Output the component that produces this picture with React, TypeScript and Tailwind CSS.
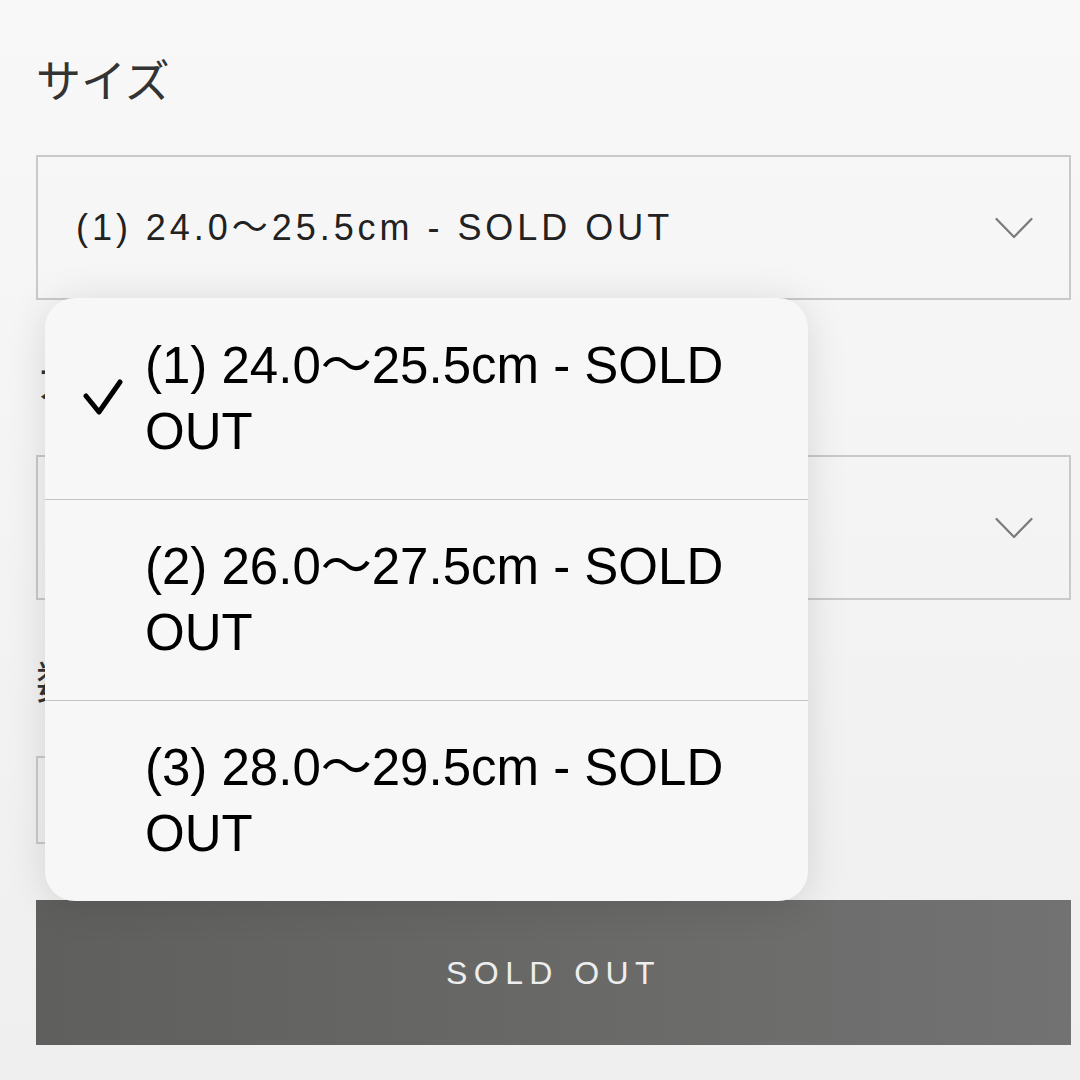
import React from "react";

const options = [
  { id: 1, label: "(1) 24.0〜25.5cm - SOLD OUT", selected: true },
  { id: 2, label: "(2) 26.0〜27.5cm - SOLD OUT", selected: false },
  { id: 3, label: "(3) 28.0〜29.5cm - SOLD OUT", selected: false },
];

function Chevron() {
  return (
    <svg width="38" height="24" viewBox="0 0 38 24" fill="none" className="shrink-0">
      <path d="M1.5 3 L19 21 L36.5 3" stroke="#7a7a7a" strokeWidth="2.2" strokeLinecap="round" strokeLinejoin="round" />
    </svg>
  );
}

function Check() {
  return (
    <svg width="40" height="40" viewBox="0 0 40 40" fill="none">
      <path d="M3 17 L16 33 L37 3" stroke="#000" strokeWidth="5" strokeLinecap="round" strokeLinejoin="round" />
    </svg>
  );
}

function Label({ children }: { children: React.ReactNode }) {
  return <div className="text-[45px] leading-[44px] text-[#333]">{children}</div>;
}

function SelectBox({ value }: { value?: string }) {
  return (
    <div className="h-[145px] border-2 border-[#c9c9c9] flex items-center justify-between pl-[38px] pr-[36px]">
      <span className="text-[36px] tracking-[0.11em] text-[#222]">{value}</span>
      <Chevron />
    </div>
  );
}

export default function App() {
  return (
    <div
      className="relative w-[1080px] h-[1080px] overflow-hidden bg-gradient-to-b from-[#f8f8f8] to-[#efefef] pt-[61px] pl-[36px] pr-[9px]"
      style={{ fontFamily: '"Liberation Sans", "Noto Sans CJK JP", sans-serif' }}
    >
      <Label>サイズ</Label>
      <div className="mt-[50px]">
        <SelectBox value="(1) 24.0〜25.5cm - SOLD OUT" />
      </div>

      <div className="mt-[61px]">
        <Label>カラー</Label>
      </div>
      <div className="mt-[50px]">
        <SelectBox />
      </div>

      <div className="mt-[62px]">
        <Label>数量</Label>
      </div>
      <div className="mt-[50px] w-[220px] h-[88px] border-2 border-[#c9c9c9]" />

      <div className="mt-[56px] h-[145px] bg-gradient-to-r from-[#5f5f5d] to-[#727272] flex items-center justify-center">
        <span className="text-[32px] tracking-[0.2em] text-[#eeeeee]">SOLD OUT</span>
      </div>

      {/* native picker popup */}
      <div className="absolute left-[45px] top-[298px] w-[763px] rounded-[30px] bg-[#f7f7f7] shadow-[0_4px_40px_rgba(0,0,0,0.12)] overflow-hidden">
        {options.map((o, i) => (
          <div
            key={o.id}
            className={`h-[201px] flex items-center ${i > 0 ? "border-t border-[#c4c4c4]" : ""}`}
          >
            <div className="w-[100px] shrink-0 flex justify-end pr-[22px]">
              {o.selected && <Check />}
            </div>
            <div className="w-[620px] text-[51px] leading-[66px] text-black">{o.label}</div>
          </div>
        ))}
      </div>
    </div>
  );
}
